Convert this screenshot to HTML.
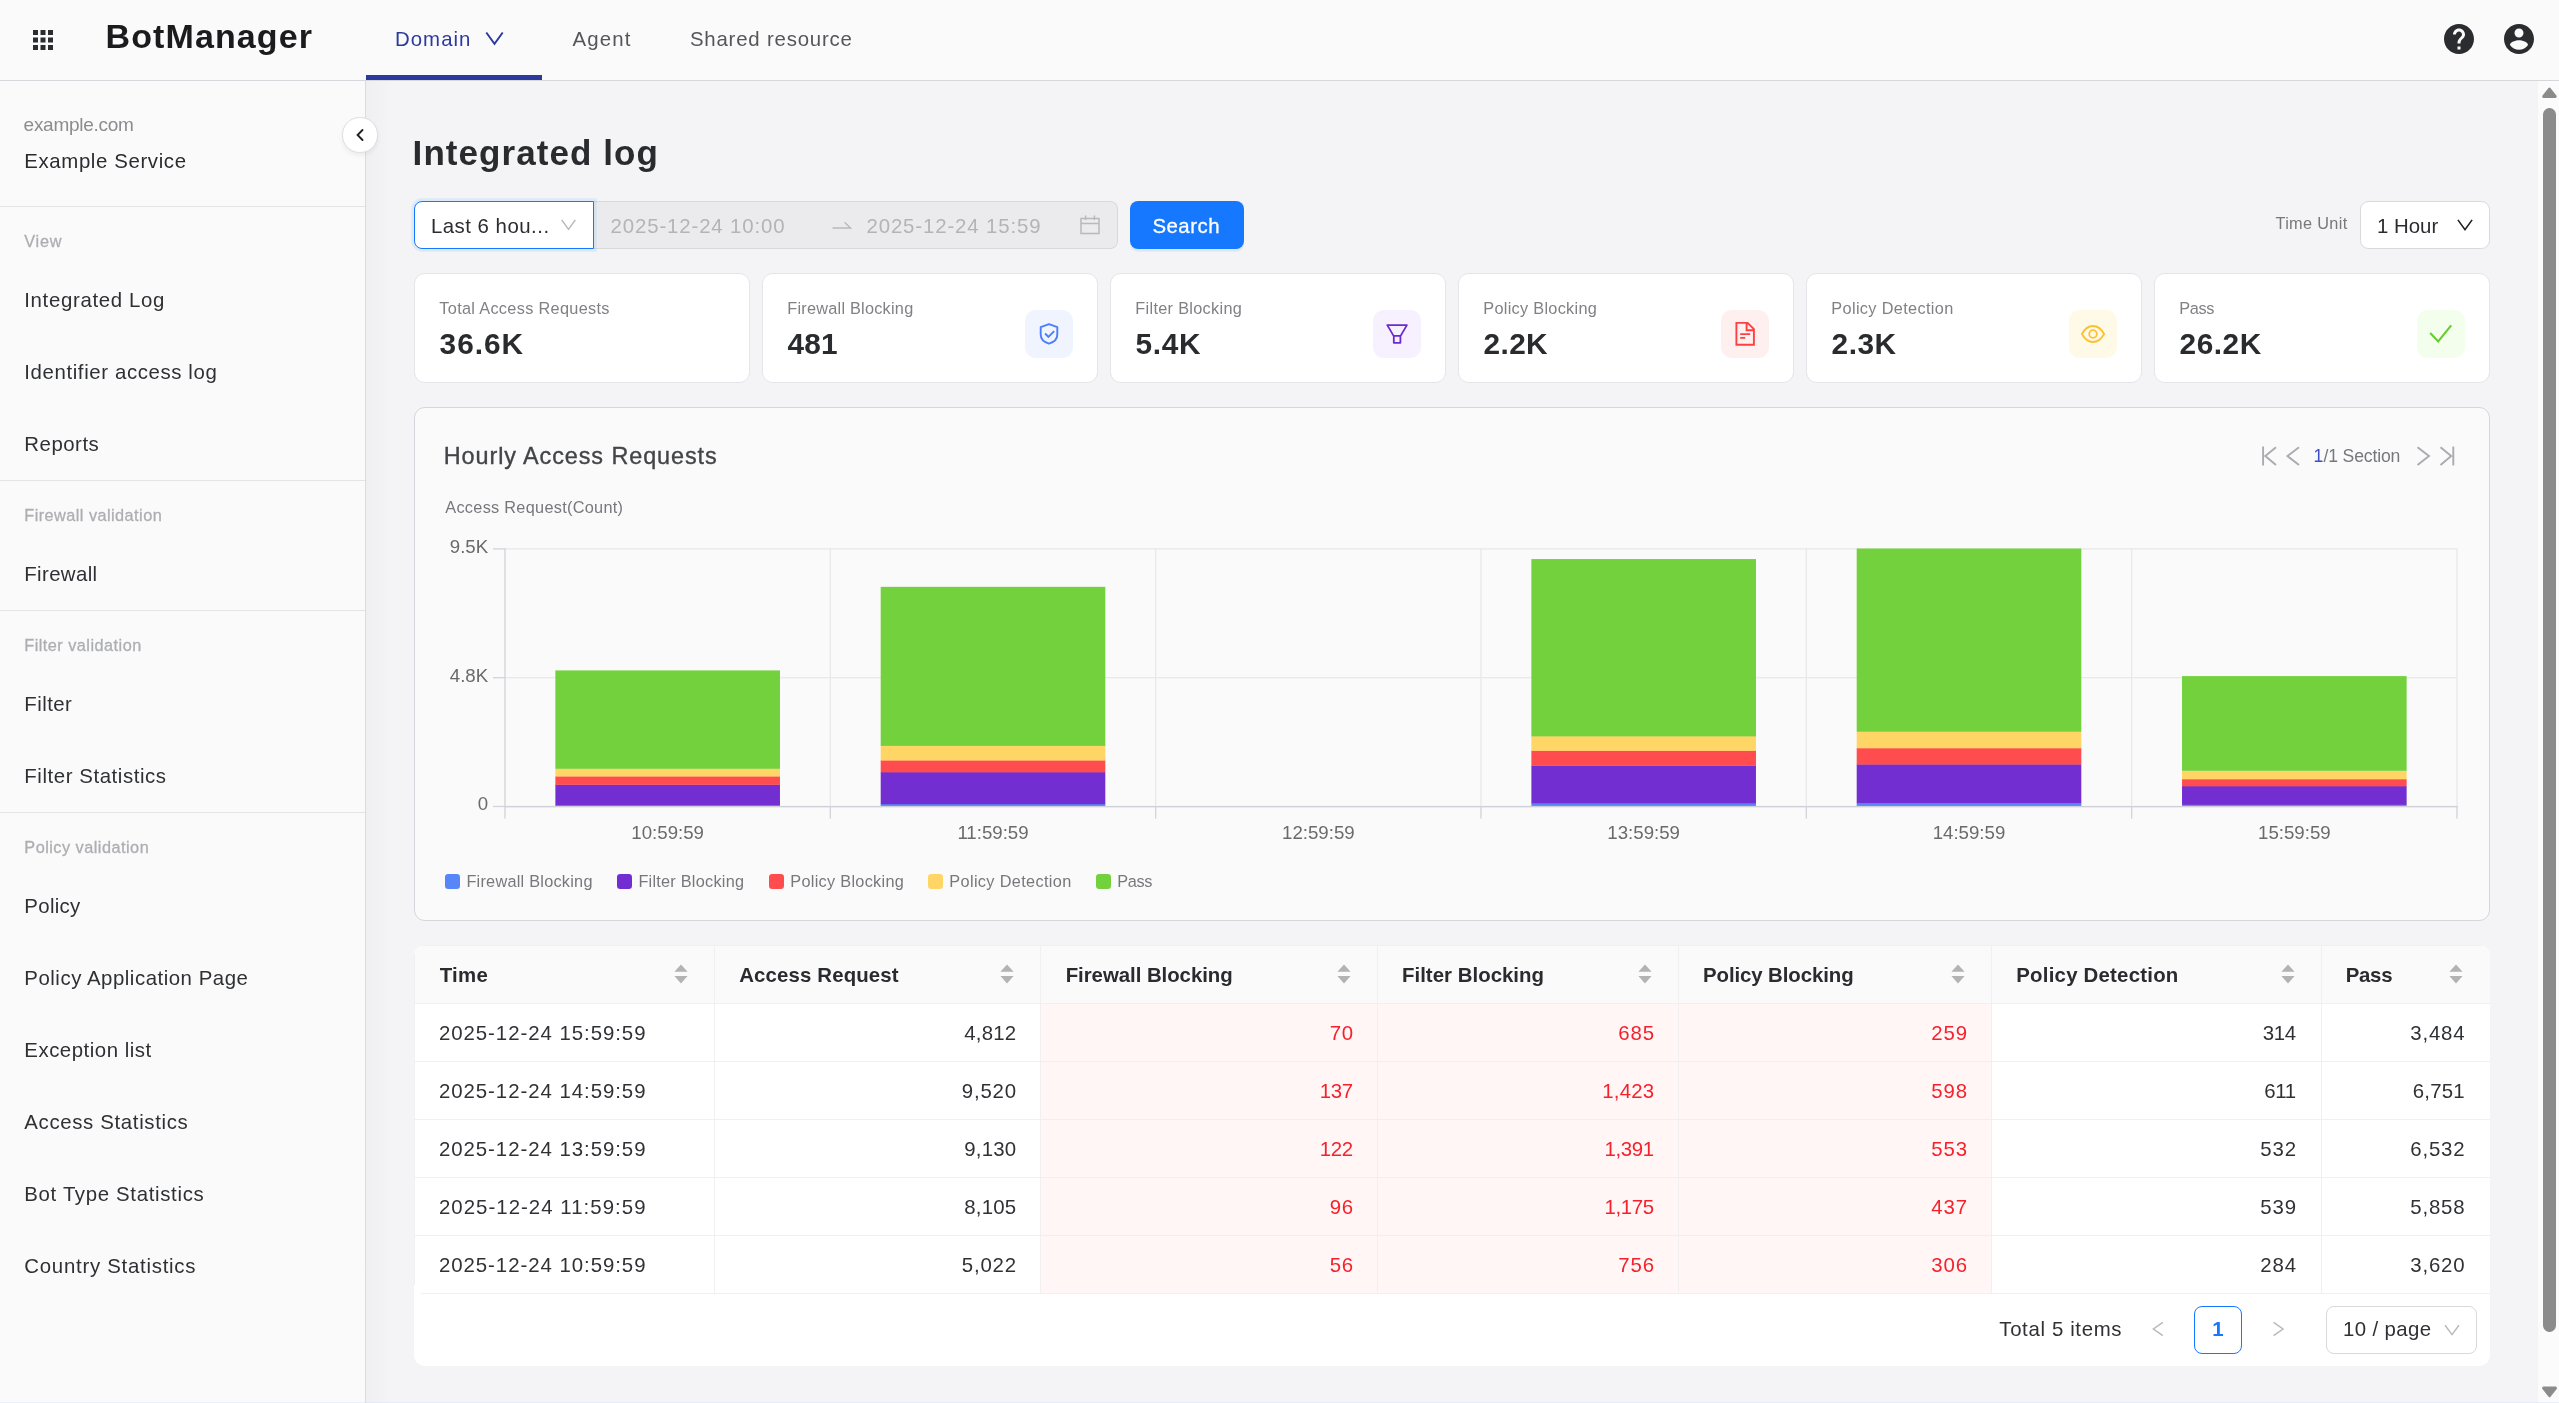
<!DOCTYPE html>
<html lang="en"><head><meta charset="utf-8"><title>BotManager - Integrated log</title>
<style>
*{box-sizing:border-box;margin:0;padding:0}
html,body{width:2559px;height:1403px;overflow:hidden;background:#f4f4f7;font-family:"Liberation Sans",sans-serif;}
.abs{position:absolute}
.t{position:absolute;white-space:nowrap;line-height:1;font-family:"Liberation Sans",sans-serif;}
#hdr{left:0;top:0;width:2559px;height:81px;background:#fafafa;border-bottom:1px solid #d6d7db}
#side{left:0;top:81px;width:366px;height:1322px;background:#fafafa;border-right:1px solid #dcdcdf}
#sideshadow{left:366px;top:81px;width:26px;height:1322px;background:linear-gradient(90deg,rgba(10,10,20,0.02),rgba(10,10,20,0))}
.hr{position:absolute;left:0;width:365px;height:1px;background:#e4e4e7}
#tabline{left:366px;top:74.5px;width:176px;height:5.5px;background:#2c3a9e}
.card{position:absolute;top:273px;width:336px;height:110px;background:#fff;border:1px solid #e4e5e9;border-radius:10.7px}
.ib{position:absolute;top:310px;width:48px;height:48px;border-radius:11px}
#panel{left:414px;top:407px;width:2076px;height:514px;background:#fafafa;border:1px solid #d5d6db;border-radius:10.7px}
#tbl{left:414px;top:945px;width:2076px;height:421px;background:#fff;border-radius:10.7px;overflow:hidden}
#thead{left:0;top:0;width:100%;height:59px;background:#fafafa;border-top:1px solid #f0f0f0;border-bottom:1px solid #f0f0f0}
.vl{position:absolute;top:0;width:1px;height:348px;background:#f0f0f0}
.hl{position:absolute;left:0;width:100%;height:1px;background:#f0f0f0}
.redc{position:absolute;top:59px;height:289px;background:#fff6f5}
.sw{position:absolute;top:874px;width:15px;height:15px;border-radius:3.3px}
</style></head><body>
<div class="abs" id="hdr"></div>
<div class="abs" id="side"></div>
<div class="abs" id="sideshadow"></div>
<div class="abs" id="tabline"></div>
<div class="hr" style="top:206px"></div>
<div class="hr" style="top:480px"></div>
<div class="hr" style="top:610px"></div>
<div class="hr" style="top:812px"></div>

<!-- header icons -->
<svg class="abs" style="left:27.8px;top:25.1px" width="30" height="30" viewBox="0 0 24 24"><path fill="#2b2c30" d="M4 8h4V4H4v4zm6 12h4v-4h-4v4zm-6 0h4v-4H4v4zm0-6h4v-4H4v4zm6 0h4v-4h-4v4zm6-10v4h4V4h-4zm-6 4h4V4h-4v4zm6 6h4v-4h-4v4zm0 6h4v-4h-4v4z"/></svg>
<svg class="abs" style="left:484px;top:31px" width="21" height="16" viewBox="0 0 21 16"><path d="M2.300 1.500 L10.500 12.900 L18.700 1.500" fill="none" stroke="#2b399d" stroke-width="1.9"/></svg>
<svg class="abs" style="left:2441px;top:21px" width="36" height="36" viewBox="0 0 24 24"><path fill="#2b2c30" d="M12 2C6.48 2 2 6.48 2 12s4.48 10 10 10 10-4.480 10-10S17.52 2 12 2zm1 17h-2v-2h2v2zm2.070-7.750l-.9.920C13.450 12.900 13 13.500 13 15h-2v-.5c0-1.100.450-2.100 1.170-2.830l1.240-1.260c.370-.360.590-.860.590-1.410 0-1.100-.9-2-2-2s-2 .9-2 2H8c0-2.210 1.790-4 4-4s4 1.790 4 4c0 .880-.360 1.680-.930 2.250z"/></svg>
<svg class="abs" style="left:2501px;top:21px" width="36" height="36" viewBox="0 0 24 24"><path fill="#2b2c30" d="M12 2C6.48 2 2 6.48 2 12s4.48 10 10 10 10-4.480 10-10S17.520 2 12 2zm0 3c1.660 0 3 1.340 3 3s-1.340 3-3 3-3-1.340-3-3 1.340-3 3-3zm0 14.200c-2.500 0-4.710-1.280-6-3.220.030-1.990 4-3.080 6-3.080 1.990 0 5.970 1.090 6 3.080-1.290 1.940-3.500 3.220-6 3.220z"/></svg>

<!-- collapse button -->
<div class="abs" style="left:342.2px;top:117.2px;width:35.4px;height:35.4px;border-radius:50%;background:#fff;border:1px solid #dedee1;box-shadow:0 2.5px 5px rgba(0,0,0,0.06)"></div>
<svg class="abs" style="left:352px;top:127px" width="16" height="16" viewBox="0 0 16 16"><path d="M10.500 3 L5.600 8 L10.500 13" fill="none" stroke="#1f2024" stroke-width="1.9" stroke-linecap="round"/></svg>

<!-- filter row -->
<div class="abs" style="left:594px;top:201px;width:524px;height:48px;background:#ebebed;border:1px solid #d9d9dc;border-left:none;border-radius:0 8px 8px 0"></div>
<div class="abs" style="left:414px;top:201px;width:180px;height:48px;background:#fff;border:1px solid #1677ff;border-radius:8px 0 0 8px;box-shadow:0 0 0 2.67px rgba(5,145,255,0.1)"></div>
<svg class="abs" style="left:561.4px;top:219.2px" width="16" height="12" viewBox="0 0 16 12"><path d="M0.700 0.900 L7.500 10.300 L14.300 0.900" fill="none" stroke="#b7b7ba" stroke-width="1.45"/></svg>
<svg class="abs" style="left:832px;top:220px" width="20" height="10" viewBox="0 0 20 10"><path d="M0.5 8 H18.5 L12.5 2.2" fill="none" stroke="#b9b9bc" stroke-width="1.4"/></svg>
<svg class="abs" style="left:1079.5px;top:214.9px" width="20" height="20" viewBox="0 0 20 20"><path d="M1 3.6 H19 V18.6 H1 Z M1 8.6 H19 M5.6 0.6 V5 M14.4 0.6 V5" fill="none" stroke="#b9b9bc" stroke-width="1.5"/></svg>
<div class="abs" style="left:1130px;top:201px;width:114px;height:47.6px;background:#1677ff;border-radius:8px;box-shadow:0 2.7px 0 rgba(5,145,255,0.1)"></div>
<div class="abs" style="left:2360.3px;top:201px;width:129.5px;height:47.6px;background:#fff;border:1px solid #d9d9dc;border-radius:8.5px"></div>
<svg class="abs" style="left:2457px;top:219px" width="16" height="12" viewBox="0 0 16 12"><path d="M0.9 0.9 L8 10.6 L15.1 0.9" fill="none" stroke="#1f1f22" stroke-width="1.6"/></svg>

<!-- cards -->
<div class="card" style="left:414px"></div>
<div class="card" style="left:762px"></div>
<div class="card" style="left:1110px"></div>
<div class="card" style="left:1458px"></div>
<div class="card" style="left:1806px"></div>
<div class="card" style="left:2154px"></div>
<div class="ib" style="left:1025px;background:#f0f4ff"></div>
<div class="ib" style="left:1373px;background:#f7f0ff"></div>
<div class="ib" style="left:1721px;background:#fff0f0"></div>
<div class="ib" style="left:2069px;background:#fffae8"></div>
<div class="ib" style="left:2417px;background:#f4feed"></div>
<!-- shield -->
<svg class="abs" style="left:1037px;top:321px" width="24" height="26" viewBox="0 0 24 26"><path d="M12 3.200 L20.300 6.100 V13.600 C20.300 18.300 16.500 21.400 12 22.700 C7.500 21.400 3.700 18.300 3.700 13.600 V6.100 Z" fill="none" stroke="#4d7ef9" stroke-width="1.9" stroke-linejoin="round"/><path d="M8.100 12.500 L11.400 16 L17.200 10.200" fill="none" stroke="#4d7ef9" stroke-width="1.9"/></svg>
<!-- funnel -->
<svg class="abs" style="left:1385px;top:322px" width="24" height="24" viewBox="0 0 24 24"><path d="M2.300 3.100 H21.900 L15.600 13.900 H8.600 Z M8.800 13.900 V20.800 H15.400 V13.900" fill="none" stroke="#6a2bd0" stroke-width="1.8" stroke-linejoin="round"/></svg>
<!-- file -->
<svg class="abs" style="left:1733px;top:320px" width="24" height="28" viewBox="0 0 24 28"><path d="M3.400 2.900 H14.600 L20.900 9.200 V24.800 H3.400 Z M13.600 2.900 V10.200 H20.900" fill="none" stroke="#ff4043" stroke-width="1.9" stroke-linejoin="miter"/><path d="M7.200 14.200 H17.200 M7.200 17.800 H12.200" fill="none" stroke="#ff4043" stroke-width="1.7"/></svg>
<!-- eye -->
<svg class="abs" style="left:2080px;top:323px" width="26" height="22" viewBox="0 0 26 22"><path d="M1.900 11 C5 5.300 8.900 3 13 3 C17.100 3 21 5.300 24.100 11 C21 16.700 17.100 19 13 19 C8.900 19 5 16.700 1.900 11 Z" fill="none" stroke="#fdc030" stroke-width="1.8"/><circle cx="13" cy="11" r="3.800" fill="none" stroke="#fdc030" stroke-width="1.8"/></svg>
<!-- check -->
<svg class="abs" style="left:2428px;top:322px" width="26" height="24" viewBox="0 0 26 24"><path d="M2.200 11 L10.200 19.400 L23.200 3.400" fill="none" stroke="#63cf2b" stroke-width="2.100"/></svg>

<!-- chart panel -->
<div class="abs" id="panel"></div>
<svg class="abs" style="left:0;top:0" width="2559" height="1403" viewBox="0 0 2559 1403"><rect x="505.0" y="548.24" width="1952.0" height="1.33" fill="#e9e9ec"/><rect x="505.0" y="677.04" width="1952.0" height="1.33" fill="#e9e9ec"/><rect x="829.67" y="548.2" width="1.33" height="258" fill="#e9e9ec"/><rect x="1155.01" y="548.2" width="1.33" height="258" fill="#e9e9ec"/><rect x="1480.34" y="548.2" width="1.33" height="258" fill="#e9e9ec"/><rect x="1805.67" y="548.2" width="1.33" height="258" fill="#e9e9ec"/><rect x="2131.01" y="548.2" width="1.33" height="258" fill="#e9e9ec"/><rect x="2456.34" y="548.2" width="1.33" height="258" fill="#e9e9ec"/><rect x="555.37" y="804.98" width="224.60" height="1.82" fill="#5886f8"/><rect x="555.37" y="784.49" width="224.60" height="20.79" fill="#722ed1"/><rect x="555.37" y="776.20" width="224.60" height="8.59" fill="#ff4d4f"/><rect x="555.37" y="768.50" width="224.60" height="8.00" fill="#ffd666"/><rect x="555.37" y="670.40" width="224.60" height="98.41" fill="#73d13d"/><rect x="880.70" y="803.90" width="224.60" height="2.90" fill="#5886f8"/><rect x="880.70" y="772.05" width="224.60" height="32.14" fill="#722ed1"/><rect x="880.70" y="760.21" width="224.60" height="12.14" fill="#ff4d4f"/><rect x="880.70" y="745.60" width="224.60" height="14.91" fill="#ffd666"/><rect x="880.70" y="586.85" width="224.60" height="159.06" fill="#73d13d"/><rect x="1531.37" y="803.19" width="224.60" height="3.61" fill="#5886f8"/><rect x="1531.37" y="765.50" width="224.60" height="38.00" fill="#722ed1"/><rect x="1531.37" y="750.51" width="224.60" height="15.29" fill="#ff4d4f"/><rect x="1531.37" y="736.09" width="224.60" height="14.72" fill="#ffd666"/><rect x="1531.37" y="559.07" width="224.60" height="177.32" fill="#73d13d"/><rect x="1856.70" y="802.79" width="224.60" height="4.01" fill="#5886f8"/><rect x="1856.70" y="764.22" width="224.60" height="38.86" fill="#722ed1"/><rect x="1856.70" y="748.02" width="224.60" height="16.51" fill="#ff4d4f"/><rect x="1856.70" y="731.46" width="224.60" height="16.86" fill="#ffd666"/><rect x="1856.70" y="548.50" width="224.60" height="183.26" fill="#73d13d"/><rect x="2182.03" y="804.60" width="224.60" height="2.20" fill="#5886f8"/><rect x="2182.03" y="786.04" width="224.60" height="18.86" fill="#722ed1"/><rect x="2182.03" y="779.02" width="224.60" height="7.32" fill="#ff4d4f"/><rect x="2182.03" y="770.51" width="224.60" height="8.81" fill="#ffd666"/><rect x="2182.03" y="676.09" width="224.60" height="94.72" fill="#73d13d"/><rect x="504.34" y="548.2" width="1.33" height="270.5" fill="#d3d4d9"/><rect x="505.00" y="805.90" width="1952.66" height="1.45" fill="#d0d1d6"/><rect x="829.67" y="806" width="1.33" height="12.7" fill="#d3d4d9"/><rect x="1155.01" y="806" width="1.33" height="12.7" fill="#d3d4d9"/><rect x="1480.34" y="806" width="1.33" height="12.7" fill="#d3d4d9"/><rect x="1805.67" y="806" width="1.33" height="12.7" fill="#d3d4d9"/><rect x="2131.01" y="806" width="1.33" height="12.7" fill="#d3d4d9"/><rect x="2456.34" y="806" width="1.33" height="12.7" fill="#d3d4d9"/><rect x="493" y="548.24" width="12" height="1.33" fill="#d3d4d9"/><rect x="493" y="677.04" width="12" height="1.33" fill="#d3d4d9"/><rect x="493" y="805.79" width="12" height="1.33" fill="#d3d4d9"/></svg>
<svg class="abs" style="left:2260px;top:444px" width="200" height="24" viewBox="0 0 200 24"><g fill="none" stroke="#aaabb1" stroke-width="1.9"><path d="M3.100 2.600 V21.600 M16 3.200 L5.300 12.100 L16 21"/><path d="M39 3.200 L27.500 12.100 L39 21"/><path d="M157.500 3.200 L169 12.100 L157.500 21"/><path d="M180.500 3.200 L191.200 12.100 L180.500 21 M193.300 2.600 V21.600"/></g></svg>
<div class="sw" style="left:445px;background:#5886f8"></div>
<div class="sw" style="left:617px;background:#722ed1"></div>
<div class="sw" style="left:769px;background:#ff4d4f"></div>
<div class="sw" style="left:928px;background:#ffd666"></div>
<div class="sw" style="left:1096px;background:#73d13d"></div>

<!-- table -->
<div class="abs" id="tbl">
<div class="abs" id="thead"></div>
<div class="redc" style="left:627px;width:950px"></div>
<div class="hl" style="top:116px"></div>
<div class="hl" style="top:174px"></div>
<div class="hl" style="top:232px"></div>
<div class="hl" style="top:290px"></div>
<div class="hl" style="top:348px;left:7px"></div>
<div class="vl" style="left:0px;top:8px;height:332px"></div>
<div class="vl" style="left:300px"></div>
<div class="vl" style="left:626px"></div>
<div class="vl" style="left:963px"></div>
<div class="vl" style="left:1264px"></div>
<div class="vl" style="left:1577px"></div>
<div class="vl" style="left:1907px"></div>
</div>
<!-- sorters -->
<svg class="abs" style="left:0;top:0" width="2559" height="1403" viewBox="0 0 2559 1403"><g fill="#b3b3b6" id="sorters">
<path d="M674.4 971.8 L681 964.4 L687.600 971.800 Z M674.400 976 L681 983.400 L687.600 976 Z"/>
<path d="M1000.400 971.800 L1007 964.400 L1013.600 971.800 Z M1000.400 976 L1007 983.400 L1013.600 976 Z"/>
<path d="M1337.400 971.800 L1344 964.400 L1350.600 971.800 Z M1337.400 976 L1344 983.400 L1350.600 976 Z"/>
<path d="M1638.400 971.800 L1645 964.400 L1651.600 971.800 Z M1638.400 976 L1645 983.400 L1651.600 976 Z"/>
<path d="M1951.400 971.800 L1958 964.400 L1964.600 971.800 Z M1951.400 976 L1958 983.400 L1964.600 976 Z"/>
<path d="M2281.400 971.800 L2288 964.400 L2294.600 971.800 Z M2281.400 976 L2288 983.400 L2294.600 976 Z"/>
<path d="M2449.400 971.800 L2456 964.400 L2462.600 971.800 Z M2449.400 976 L2456 983.400 L2462.600 976 Z"/>
</g></svg>
<!-- pagination -->
<div class="abs" style="left:2194px;top:1306px;width:48px;height:48px;border:1px solid #1677ff;border-radius:8px;background:#fff"></div>
<div class="abs" style="left:2326.300px;top:1306px;width:150.5px;height:48px;border:1px solid #d9d9dc;border-radius:8px;background:#fff"></div>
<svg class="abs" style="left:2150px;top:1320px" width="16" height="18" viewBox="0 0 16 18"><path d="M12.800 2.400 L3.400 9 L12.800 15.600" fill="none" stroke="#b9b9bc" stroke-width="1.5"/></svg>
<svg class="abs" style="left:2270px;top:1320px" width="16" height="18" viewBox="0 0 16 18"><path d="M3.600 2.400 L13 9 L3.600 15.600" fill="none" stroke="#b9b9bc" stroke-width="1.5"/></svg>
<svg class="abs" style="left:2444px;top:1324px" width="16" height="12" viewBox="0 0 16 12"><path d="M1 1.200 L8 10.600 L15 1.200" fill="none" stroke="#b9b9bc" stroke-width="1.5"/></svg>

<!-- scrollbar -->
<div class="abs" style="left:2538px;top:81px;width:21px;height:1322px;background:#fbfbfb"></div>
<div class="abs" style="left:2543.200px;top:108px;width:12.900px;height:1224px;background:#8b8b8b;border-radius:6.450px"></div>
<svg class="abs" style="left:2540px;top:86px" width="19" height="14" viewBox="0 0 19 14"><path d="M3.700 10.500 L9.450 3.200 L15.200 10.500 Z" fill="#8b8b8b" stroke="#8b8b8b" stroke-width="3" stroke-linejoin="round"/></svg>
<svg class="abs" style="left:2540px;top:1385px" width="19" height="14" viewBox="0 0 19 14"><path d="M3.600 3.100 L9.550 10.700 L15.500 3.100 Z" fill="#8b8b8b" stroke="#8b8b8b" stroke-width="3" stroke-linejoin="round"/></svg>
<div class="abs" style="left:0;top:1402px;width:2559px;height:1px;background:rgba(200,220,245,0.35)"></div>

<div id="txt" style="position:absolute;left:0;top:0;width:2559px;height:1403px;will-change:transform">
<div class="t" id="logo" style="top:18.92px;font-size:34.00px;color:#1b1b1d;font-weight:700;letter-spacing:1.103px;left:105.60px;">BotManager</div>
<div class="t" id="tab1" style="top:28.73px;font-size:20.40px;color:#2c3a9e;letter-spacing:1.027px;left:395.00px;">Domain</div>
<div class="t" id="tab2" style="top:28.73px;font-size:20.40px;color:#55565a;letter-spacing:1.126px;left:572.50px;">Agent</div>
<div class="t" id="tab3" style="top:28.73px;font-size:20.40px;color:#55565a;letter-spacing:0.804px;left:689.90px;">Shared resource</div>
<div class="t" id="dom" style="top:114.62px;font-size:19.00px;color:#8b8c90;letter-spacing:-0.270px;left:23.60px;">example.com</div>
<div class="t" id="svc" style="top:151.13px;font-size:20.40px;color:#2b2c30;letter-spacing:0.621px;left:24.30px;">Example Service</div>
<div class="t" id="sec0" style="top:232.90px;font-size:16.30px;color:#adaeb2;letter-spacing:0.733px;left:24.30px;-webkit-text-stroke:0.3px #adaeb2;">View</div>
<div class="t" id="sec1" style="top:506.90px;font-size:16.30px;color:#adaeb2;letter-spacing:0.444px;left:24.30px;-webkit-text-stroke:0.3px #adaeb2;">Firewall validation</div>
<div class="t" id="sec2" style="top:636.90px;font-size:16.30px;color:#adaeb2;letter-spacing:0.463px;left:24.30px;-webkit-text-stroke:0.3px #adaeb2;">Filter validation</div>
<div class="t" id="sec3" style="top:838.90px;font-size:16.30px;color:#adaeb2;letter-spacing:0.478px;left:24.30px;-webkit-text-stroke:0.3px #adaeb2;">Policy validation</div>
<div class="t" id="m0" style="top:289.63px;font-size:20.40px;color:#2f3034;letter-spacing:0.660px;left:24.30px;">Integrated Log</div>
<div class="t" id="m1" style="top:361.63px;font-size:20.40px;color:#2f3034;letter-spacing:0.614px;left:24.30px;">Identifier access log</div>
<div class="t" id="m2" style="top:433.63px;font-size:20.40px;color:#2f3034;letter-spacing:0.516px;left:24.30px;">Reports</div>
<div class="t" id="m3" style="top:563.63px;font-size:20.40px;color:#2f3034;letter-spacing:0.364px;left:24.30px;">Firewall</div>
<div class="t" id="m4" style="top:693.63px;font-size:20.40px;color:#2f3034;letter-spacing:0.458px;left:24.30px;">Filter</div>
<div class="t" id="m5" style="top:765.63px;font-size:20.40px;color:#2f3034;letter-spacing:0.571px;left:24.30px;">Filter Statistics</div>
<div class="t" id="m6" style="top:895.63px;font-size:20.40px;color:#2f3034;letter-spacing:0.319px;left:24.30px;">Policy</div>
<div class="t" id="m7" style="top:967.63px;font-size:20.40px;color:#2f3034;letter-spacing:0.528px;left:24.30px;">Policy Application Page</div>
<div class="t" id="m8" style="top:1039.63px;font-size:20.40px;color:#2f3034;letter-spacing:0.520px;left:24.30px;">Exception list</div>
<div class="t" id="m9" style="top:1111.63px;font-size:20.40px;color:#2f3034;letter-spacing:0.657px;left:24.30px;">Access Statistics</div>
<div class="t" id="m10" style="top:1183.63px;font-size:20.40px;color:#2f3034;letter-spacing:0.669px;left:24.30px;">Bot Type Statistics</div>
<div class="t" id="m11" style="top:1255.63px;font-size:20.40px;color:#2f3034;letter-spacing:0.738px;left:24.30px;">Country Statistics</div>
<div class="t" id="title" style="top:134.77px;font-size:35.00px;color:#2a2b2f;font-weight:700;letter-spacing:1.069px;left:412.60px;">Integrated log</div>
<div class="t" id="sel1" style="top:215.73px;font-size:20.40px;color:#2b2c30;letter-spacing:0.497px;left:430.90px;">Last 6 hou...</div>
<div class="t" id="d1" style="top:215.73px;font-size:20.40px;color:#b4b4b7;letter-spacing:0.867px;left:610.60px;">2025-12-24 10:00</div>
<div class="t" id="d2" style="top:215.73px;font-size:20.40px;color:#b4b4b7;letter-spacing:0.867px;left:866.50px;">2025-12-24 15:59</div>
<div class="t" id="search" style="top:215.73px;font-size:20.40px;color:#ffffff;letter-spacing:0.518px;left:1152.40px;-webkit-text-stroke:0.3px #ffffff;">Search</div>
<div class="t" id="tu" style="top:215.20px;font-size:16.30px;color:#77787c;letter-spacing:0.330px;left:2275.50px;">Time Unit</div>
<div class="t" id="hour" style="top:215.73px;font-size:20.40px;color:#2b2c30;letter-spacing:-0.021px;left:2377.10px;">1 Hour</div>
<div class="t" id="cl0" style="top:300.40px;font-size:16.30px;color:#808185;letter-spacing:0.320px;left:439.30px;">Total Access Requests</div>
<div class="t" id="cv0" style="top:328.67px;font-size:29.80px;color:#2a2b2f;font-weight:700;letter-spacing:0.971px;left:439.60px;">36.6K</div>
<div class="t" id="cl1" style="top:300.40px;font-size:16.30px;color:#808185;letter-spacing:0.234px;left:787.30px;">Firewall Blocking</div>
<div class="t" id="cv1" style="top:328.67px;font-size:29.80px;color:#2a2b2f;font-weight:700;letter-spacing:0.091px;left:787.60px;">481</div>
<div class="t" id="cl2" style="top:300.40px;font-size:16.30px;color:#808185;letter-spacing:0.304px;left:1135.30px;">Filter Blocking</div>
<div class="t" id="cv2" style="top:328.67px;font-size:29.80px;color:#2a2b2f;font-weight:700;letter-spacing:0.682px;left:1135.60px;">5.4K</div>
<div class="t" id="cl3" style="top:300.40px;font-size:16.30px;color:#808185;letter-spacing:0.286px;left:1483.30px;">Policy Blocking</div>
<div class="t" id="cv3" style="top:328.67px;font-size:29.80px;color:#2a2b2f;font-weight:700;letter-spacing:0.349px;left:1483.60px;">2.2K</div>
<div class="t" id="cl4" style="top:300.40px;font-size:16.30px;color:#808185;letter-spacing:0.350px;left:1831.30px;">Policy Detection</div>
<div class="t" id="cv4" style="top:328.67px;font-size:29.80px;color:#2a2b2f;font-weight:700;letter-spacing:0.482px;left:1831.60px;">2.3K</div>
<div class="t" id="cl5" style="top:300.40px;font-size:16.30px;color:#808185;letter-spacing:-0.401px;left:2179.30px;">Pass</div>
<div class="t" id="cv5" style="top:328.67px;font-size:29.80px;color:#2a2b2f;font-weight:700;letter-spacing:0.521px;left:2179.60px;">26.2K</div>
<div class="t" id="ct" style="top:444.79px;font-size:23.40px;color:#434448;letter-spacing:0.923px;left:443.80px;-webkit-text-stroke:0.35px #434448;">Hourly Access Requests</div>
<div class="t" id="cy" style="top:498.60px;font-size:16.30px;color:#77787c;letter-spacing:0.288px;left:445.30px;">Access Request(Count)</div>
<div class="t" id="pg1" style="top:448.20px;font-size:17.60px;color:#3a50c8;left:2313.40px;">1</div>
<div class="t" id="pg2" style="top:448.20px;font-size:17.60px;color:#77787c;letter-spacing:-0.139px;left:2323.40px;">/1 Section</div>
<div class="t" id="y9.5K" style="top:537.75px;font-size:18.67px;color:#6a6a6d;right:2070.80px;">9.5K</div>
<div class="t" id="y4.8K" style="top:666.75px;font-size:18.67px;color:#6a6a6d;right:2070.80px;">4.8K</div>
<div class="t" id="y0" style="top:795.35px;font-size:18.67px;color:#6a6a6d;right:2070.80px;">0</div>
<div class="t" id="x0" style="top:823.70px;font-size:18.67px;color:#6a6a6d;left:667.67px;transform:translateX(-50%);">10:59:59</div>
<div class="t" id="x1" style="top:823.70px;font-size:18.67px;color:#6a6a6d;left:993.00px;transform:translateX(-50%);">11:59:59</div>
<div class="t" id="x2" style="top:823.70px;font-size:18.67px;color:#6a6a6d;left:1318.33px;transform:translateX(-50%);">12:59:59</div>
<div class="t" id="x3" style="top:823.70px;font-size:18.67px;color:#6a6a6d;left:1643.67px;transform:translateX(-50%);">13:59:59</div>
<div class="t" id="x4" style="top:823.70px;font-size:18.67px;color:#6a6a6d;left:1969.00px;transform:translateX(-50%);">14:59:59</div>
<div class="t" id="x5" style="top:823.70px;font-size:18.67px;color:#6a6a6d;left:2294.33px;transform:translateX(-50%);">15:59:59</div>
<div class="t" id="lg0" style="top:873.10px;font-size:16.30px;color:#77787c;letter-spacing:0.246px;left:466.40px;">Firewall Blocking</div>
<div class="t" id="lg1" style="top:873.10px;font-size:16.30px;color:#77787c;letter-spacing:0.239px;left:638.40px;">Filter Blocking</div>
<div class="t" id="lg2" style="top:873.10px;font-size:16.30px;color:#77787c;letter-spacing:0.286px;left:790.30px;">Policy Blocking</div>
<div class="t" id="lg3" style="top:873.10px;font-size:16.30px;color:#77787c;letter-spacing:0.350px;left:949.30px;">Policy Detection</div>
<div class="t" id="lg4" style="top:873.10px;font-size:16.30px;color:#77787c;letter-spacing:-0.401px;left:1117.30px;">Pass</div>
<div class="t" id="th0" style="top:965.13px;font-size:20.40px;color:#2a2b2f;font-weight:700;letter-spacing:0.322px;left:439.70px;">Time</div>
<div class="t" id="th1" style="top:965.13px;font-size:20.40px;color:#2a2b2f;font-weight:700;letter-spacing:0.143px;left:739.20px;">Access Request</div>
<div class="t" id="th2" style="top:965.13px;font-size:20.40px;color:#2a2b2f;font-weight:700;letter-spacing:-0.044px;left:1065.70px;">Firewall Blocking</div>
<div class="t" id="th3" style="top:965.13px;font-size:20.40px;color:#2a2b2f;font-weight:700;letter-spacing:0.027px;left:1402.00px;">Filter Blocking</div>
<div class="t" id="th4" style="top:965.13px;font-size:20.40px;color:#2a2b2f;font-weight:700;letter-spacing:-0.089px;left:1703.00px;">Policy Blocking</div>
<div class="t" id="th5" style="top:965.13px;font-size:20.40px;color:#2a2b2f;font-weight:700;letter-spacing:0.224px;left:2016.30px;">Policy Detection</div>
<div class="t" id="th6" style="top:965.13px;font-size:20.40px;color:#2a2b2f;font-weight:700;letter-spacing:-0.275px;left:2345.70px;">Pass</div>
<div class="t" id="r0t" style="top:1022.53px;font-size:20.40px;color:#303135;letter-spacing:0.959px;left:438.90px;">2025-12-24 15:59:59</div>
<div class="t" id="r0c0" style="top:1022.53px;font-size:20.40px;color:#303135;letter-spacing:0.217px;right:1542.68px;">4,812</div>
<div class="t" id="r0c1" style="top:1022.53px;font-size:20.40px;color:#f5222d;letter-spacing:0.712px;right:1205.19px;">70</div>
<div class="t" id="r0c2" style="top:1022.53px;font-size:20.40px;color:#f5222d;letter-spacing:0.934px;right:903.97px;">685</div>
<div class="t" id="r0c3" style="top:1022.53px;font-size:20.40px;color:#f5222d;letter-spacing:0.934px;right:590.97px;">259</div>
<div class="t" id="r0c4" style="top:1022.53px;font-size:20.40px;color:#303135;letter-spacing:-0.316px;right:263.22px;">314</div>
<div class="t" id="r0c5" style="top:1022.53px;font-size:20.40px;color:#303135;letter-spacing:0.842px;right:93.56px;">3,484</div>
<div class="t" id="r1t" style="top:1080.53px;font-size:20.40px;color:#303135;letter-spacing:0.959px;left:438.90px;">2025-12-24 14:59:59</div>
<div class="t" id="r1c0" style="top:1080.53px;font-size:20.40px;color:#303135;letter-spacing:0.842px;right:1542.06px;">9,520</div>
<div class="t" id="r1c1" style="top:1080.53px;font-size:20.40px;color:#f5222d;letter-spacing:-0.316px;right:1206.22px;">137</div>
<div class="t" id="r1c2" style="top:1080.53px;font-size:20.40px;color:#f5222d;letter-spacing:0.217px;right:904.68px;">1,423</div>
<div class="t" id="r1c3" style="top:1080.53px;font-size:20.40px;color:#f5222d;letter-spacing:0.934px;right:590.97px;">598</div>
<div class="t" id="r1c4" style="top:1080.53px;font-size:20.40px;color:#303135;letter-spacing:-0.350px;right:263.25px;">611</div>
<div class="t" id="r1c5" style="top:1080.53px;font-size:20.40px;color:#303135;letter-spacing:0.217px;right:94.18px;">6,751</div>
<div class="t" id="r2t" style="top:1138.53px;font-size:20.40px;color:#303135;letter-spacing:0.959px;left:438.90px;">2025-12-24 13:59:59</div>
<div class="t" id="r2c0" style="top:1138.53px;font-size:20.40px;color:#303135;letter-spacing:0.217px;right:1542.68px;">9,130</div>
<div class="t" id="r2c1" style="top:1138.53px;font-size:20.40px;color:#f5222d;letter-spacing:-0.316px;right:1206.22px;">122</div>
<div class="t" id="r2c2" style="top:1138.53px;font-size:20.40px;color:#f5222d;letter-spacing:-0.350px;right:905.25px;">1,391</div>
<div class="t" id="r2c3" style="top:1138.53px;font-size:20.40px;color:#f5222d;letter-spacing:0.934px;right:590.97px;">553</div>
<div class="t" id="r2c4" style="top:1138.53px;font-size:20.40px;color:#303135;letter-spacing:0.934px;right:261.97px;">532</div>
<div class="t" id="r2c5" style="top:1138.53px;font-size:20.40px;color:#303135;letter-spacing:0.842px;right:93.56px;">6,532</div>
<div class="t" id="r3t" style="top:1196.53px;font-size:20.40px;color:#303135;letter-spacing:1.043px;left:438.90px;">2025-12-24 11:59:59</div>
<div class="t" id="r3c0" style="top:1196.53px;font-size:20.40px;color:#303135;letter-spacing:0.217px;right:1542.68px;">8,105</div>
<div class="t" id="r3c1" style="top:1196.53px;font-size:20.40px;color:#f5222d;letter-spacing:0.712px;right:1205.19px;">96</div>
<div class="t" id="r3c2" style="top:1196.53px;font-size:20.40px;color:#f5222d;letter-spacing:-0.350px;right:905.25px;">1,175</div>
<div class="t" id="r3c3" style="top:1196.53px;font-size:20.40px;color:#f5222d;letter-spacing:0.934px;right:590.97px;">437</div>
<div class="t" id="r3c4" style="top:1196.53px;font-size:20.40px;color:#303135;letter-spacing:0.934px;right:261.97px;">539</div>
<div class="t" id="r3c5" style="top:1196.53px;font-size:20.40px;color:#303135;letter-spacing:0.842px;right:93.56px;">5,858</div>
<div class="t" id="r4t" style="top:1254.53px;font-size:20.40px;color:#303135;letter-spacing:0.959px;left:438.90px;">2025-12-24 10:59:59</div>
<div class="t" id="r4c0" style="top:1254.53px;font-size:20.40px;color:#303135;letter-spacing:0.842px;right:1542.06px;">5,022</div>
<div class="t" id="r4c1" style="top:1254.53px;font-size:20.40px;color:#f5222d;letter-spacing:0.712px;right:1205.19px;">56</div>
<div class="t" id="r4c2" style="top:1254.53px;font-size:20.40px;color:#f5222d;letter-spacing:0.934px;right:903.97px;">756</div>
<div class="t" id="r4c3" style="top:1254.53px;font-size:20.40px;color:#f5222d;letter-spacing:0.934px;right:590.97px;">306</div>
<div class="t" id="r4c4" style="top:1254.53px;font-size:20.40px;color:#303135;letter-spacing:0.934px;right:261.97px;">284</div>
<div class="t" id="r4c5" style="top:1254.53px;font-size:20.40px;color:#303135;letter-spacing:0.842px;right:93.56px;">3,620</div>
<div class="t" id="tot" style="top:1318.93px;font-size:20.40px;color:#303135;letter-spacing:0.644px;left:1999.30px;">Total 5 items</div>
<div class="t" id="p1" style="top:1319.33px;font-size:20.40px;color:#1677ff;font-weight:700;left:2218.00px;transform:translateX(-50%);">1</div>
<div class="t" id="pp" style="top:1318.93px;font-size:20.40px;color:#303135;letter-spacing:0.407px;left:2342.90px;">10 / page</div>
</div>
</body></html>
